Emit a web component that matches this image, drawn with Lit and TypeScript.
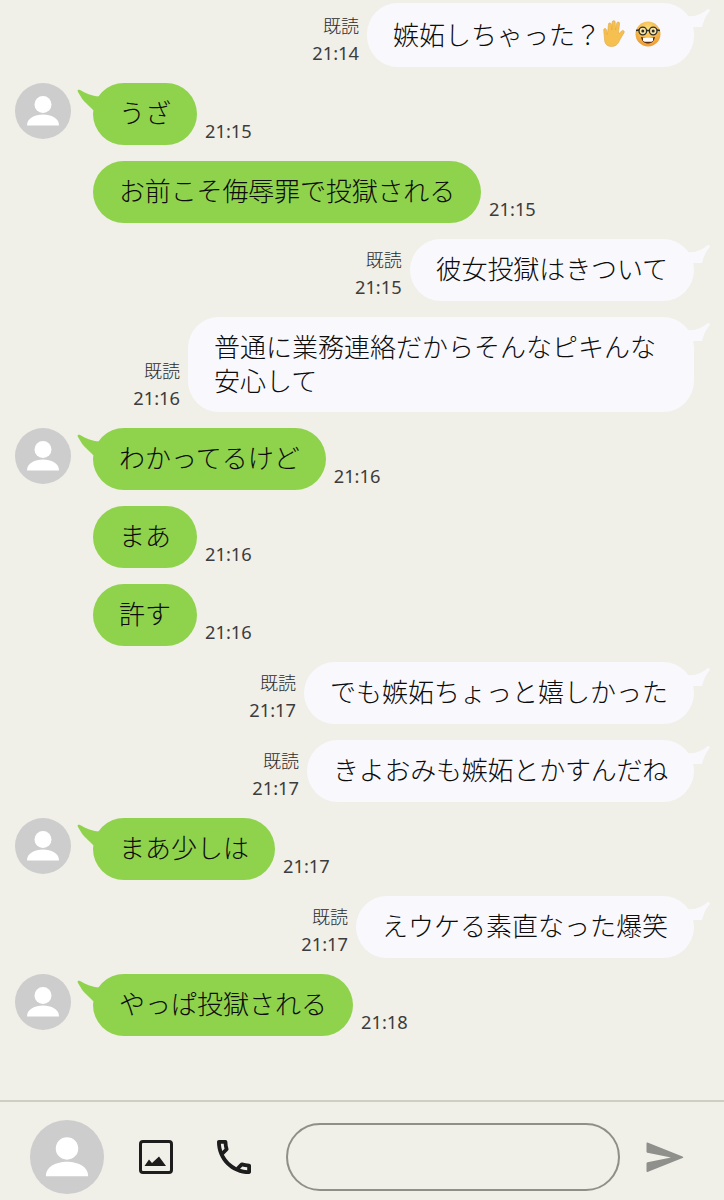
import { LitElement, html, css, svg } from "lit";
import { customElement } from "lit/decorators.js";
import { styleMap } from "lit/directives/style-map.js";

type Msg = {
  side: "in" | "out";
  text: string;
  time: string;
  avatar?: boolean;
  wide?: boolean;
  emoji?: boolean;
  spacing?: number;
};

const MSGS: Msg[] = [
  { side: "out", text: "嫉妬しちゃった？", time: "21:14", emoji: true },
  { side: "in", text: "うざ", time: "21:15", avatar: true },
  { side: "in", text: "お前こそ侮辱罪で投獄される", time: "21:15", spacing: -0.15 },
  { side: "out", text: "彼女投獄はきついて", time: "21:15", spacing: -0.1 },
  { side: "out", text: "普通に業務連絡だからそんなピキんな\n安心して", time: "21:16", wide: true },
  { side: "in", text: "わかってるけど", time: "21:16", avatar: true },
  { side: "in", text: "まあ", time: "21:16" },
  { side: "in", text: "許す", time: "21:16" },
  { side: "out", text: "でも嫉妬ちょっと嬉しかった", time: "21:17" },
  { side: "out", text: "きよおみも嫉妬とかすんだね", time: "21:17", spacing: -0.23 },
  { side: "in", text: "まあ少しは", time: "21:17", avatar: true },
  { side: "out", text: "えウケる素直なった爆笑", time: "21:17" },
  { side: "in", text: "やっぱ投獄される", time: "21:18", avatar: true },
];

const person = svg`<circle cx="28" cy="28" r="28" fill="#cdcdcd"/><circle cx="28" cy="21.5" r="8.500" fill="#fff"/><path d="M12 42.500c0-7.500 8-11 16-11s16 3.500 16 11z" fill="#fff"/>`;

@customElement("app-root")
export class AppRoot extends LitElement {
  static styles = css`
    :host {
      display: flex;
      flex-direction: column;
      width: 724px;
      height: 1200px;
      background: #f0efe8;
      font-family: "Noto Sans", "Noto Sans CJK JP", sans-serif;
      color: #0c0c0c;
      overflow: hidden;
    }
    .log {
      flex: 1;
      display: flex;
      flex-direction: column;
      gap: 16px;
      padding: 3px 30px 0 15px;
    }
    .row {
      display: flex;
      align-items: flex-end;
      gap: 8px;
    }
    .row.out {
      justify-content: flex-end;
    }
    .row.in {
      padding-left: 78px;
      position: relative;
    }
    .avatar {
      position: absolute;
      left: 0;
      top: 0;
      width: 56px;
      height: 56px;
    }
    .bubble {
      position: relative;
      padding: 12px 26px 16px;
      border-radius: 31px;
      font-family: "Noto Sans CJK JP", sans-serif;
      font-weight: 300;
      font-size: 26px;
      line-height: 34px;
      white-space: pre;
    }
    .out .bubble {
      background: #f9f9fd;
    }
    .in .bubble {
      background: #8fd24c;
    }
    .bubble.wide {
      padding: 12px 38px 15px 26px;
    }
    .bubble.emoji {
      display: flex;
      align-items: center;
      padding: 14px 33px 16px 26px;
    }
    .tail {
      position: absolute;
      top: 0;
      width: 24px;
      height: 32px;
    }
    .out .tail {
      right: -16px;
    }
    .in .tail {
      left: -16px;
    }
    .hand {
      width: 27px;
      height: 28px;
    }
    .nerd {
      width: 26px;
      height: 26px;
      margin-left: 7px;
    }
    .meta {
      display: flex;
      flex-direction: column;
      align-items: flex-end;
      color: #3c3c3c;
      padding-bottom: 2px;
    }
    .read {
      font-family: "Noto Sans CJK JP", sans-serif;
      font-weight: 300;
      font-size: 18px;
      line-height: 24px;
      margin-bottom: 4px;
      color: #2c2c2c;
    }
    .time {
      font-size: 18.3px;
      line-height: 24px;
    }
    .bar {
      height: 100px;
      box-sizing: border-box;
      border-top: 2px solid #cfcec5;
      display: flex;
      align-items: center;
      padding: 11px 0 0 30px;
    }
    .me {
      width: 74px;
      height: 74px;
    }
    .pic {
      width: 34px;
      height: 34px;
      margin-left: 35px;
    }
    .phone {
      width: 34px;
      height: 34px;
      margin-left: 44px;
    }
    .input {
      flex: none;
      width: 334px;
      height: 68px;
      box-sizing: border-box;
      border: 2px solid #8f8f88;
      border-radius: 34px;
      margin-left: 35px;
    }
    .send {
      width: 38px;
      height: 32px;
      margin-left: 26px;
    }
  `;

  private hand() {
    return html`<svg class="hand" viewBox="0 0 27 28"><path d="M7.500 4c0-1.500 2.500-1.500 2.700 0l.6 6 .4-8c.1-1.800 3-1.800 3 0l.3 8 1.300-7c.4-1.600 3-1.200 2.800.5l-1 8 .3 2.500 2.600-3c1.300-1.500 3.500 0 2.500 1.700l-4 6.800c-1.500 3.500-3.500 7-8.500 7-5 0-7-3.500-7-7.500l-.8-9c-.1-1.700 2.300-2 2.700-.2l1 4.700z" fill="#f5c04f" stroke="#e0a544" stroke-width=".6"/></svg>`;
  }

  private nerd() {
    return html`<svg class="nerd" viewBox="0 0 26 26"><defs><radialGradient id="f" cx=".5" cy=".3" r=".75"><stop offset="0" stop-color="#fbe07a"/><stop offset="1" stop-color="#ec962c"/></radialGradient></defs><circle cx="13" cy="13" r="12.500" fill="url(#f)"/><circle cx="7.800" cy="10" r="3.800" fill="#f9e6a0" stroke="#2b2b2b" stroke-width="1.300"/><circle cx="18.200" cy="10" r="3.800" fill="#f9e6a0" stroke="#2b2b2b" stroke-width="1.300"/><path d="M11.500 9.500h3M1 9.500l3-.500M25 9.500l-3-.500" stroke="#2b2b2b" stroke-width="1.300"/><circle cx="7.800" cy="10" r="1.500" fill="#2b2b2b"/><circle cx="18.200" cy="10" r="1.500" fill="#2b2b2b"/><path d="M6 16c4.500 1.500 9.500 1.500 14 0-.8 4.500-3.800 6.500-7 6.500S6.800 20.500 6 16z" fill="#5b2c14"/><path d="M8 16.800h10v3l-1.500 1h-7L8 19.800z" fill="#fff"/></svg>`;
  }

  private row(m: Msg) {
    const isOut = m.side === "out";
    const tail = isOut
      ? html`<svg class="tail" viewBox="0 0 24 32"><path d="M2 13 C9 14 16 11 21 6.500 C23 5 24.500 6.500 23.500 8.500 C20 12 17.500 18 16 24 L4 24z" fill="#f9f9fd"/></svg>`
      : html`<svg class="tail" viewBox="0 0 24 32"><path d="M22 13.500 C15 13 8 10 3 7 C1 6 0 7.500 1 9 C3 12 6 18 9 20 C11 22 14 25 16 27 L26 27z" fill="#8fd24c"/></svg>`;
    const showTail = isOut || m.avatar;
    const style = m.spacing ? styleMap({ letterSpacing: `${m.spacing}px` }) : "";
    const body = html`<div class="bubble ${m.wide ? "wide" : ""} ${m.emoji ? "emoji" : ""}" style=${style}>${showTail ? tail : ""}${m.text}${m.emoji ? html`${this.hand()}${this.nerd()}` : ""}</div>`;
    if (isOut) {
      return html`<div class="row out">
        <div class="meta"><span class="read">既読</span><span class="time">${m.time}</span></div>
        ${body}
      </div>`;
    }
    return html`<div class="row in">
      ${m.avatar ? html`<svg class="avatar" viewBox="0 0 56 56">${person}</svg>` : ""}
      ${body}
      <div class="meta"><span class="time">${m.time}</span></div>
    </div>`;
  }

  render() {
    return html`
      <div class="log">${MSGS.map((m) => this.row(m))}</div>
      <div class="bar">
        <svg class="me" viewBox="0 0 56 56">${person}</svg>
        <svg class="pic" viewBox="0 0 34 34"><rect x="1.500" y="1.500" width="31" height="31" rx="2.500" fill="none" stroke="#1d1d1d" stroke-width="3"/><path d="M5.500 26l4.500-6.500 3 3.500 7-6.500 7 9.500z" fill="#1d1d1d"/></svg>
        <svg class="phone" viewBox="3 3 18 18"><path fill="#1d1d1d" d="M6.540 5c.06.89.21 1.760.45 2.590l-1.200 1.200c-.41-1.200-.67-2.470-.76-3.790h1.510m9.860 12.020c.85.24 1.720.39 2.600.45v1.490c-1.320-.09-2.590-.35-3.800-.75l1.200-1.190M7.500 3H4c-.55 0-1 .45-1 1 0 9.390 7.610 17 17 17 .55 0 1-.45 1-1v-3.490c0-.55-.45-1-1-1-1.240 0-2.450-.2-3.570-.57-.1-.04-.21-.05-.31-.05-.26 0-.51.1-.71.29l-2.200 2.200c-2.830-1.450-5.150-3.760-6.590-6.590l2.200-2.200c.28-.28.36-.67.25-1.020C8.700 6.450 8.500 5.250 8.500 4c0-.55-.45-1-1-1z"/></svg>
        <div class="input"></div>
        <svg class="send" viewBox="0 0 38 32"><path d="M1.500 1.500 L36.500 15.500 C37.500 16 37.500 16.500 36.500 17 L1.500 31 C.8 31 .5 30.500 .5 30 V22.500 C.5 21.800 1 21.300 1.500 21.200 L25 16.500 1.500 11.800 C1 11.700 .5 11.200 .5 10.500 V2.500 C.5 1.700 .8 1.300 1.500 1.500z" fill="#8f8f8b"/></svg>
      </div>
    `;
  }
}
